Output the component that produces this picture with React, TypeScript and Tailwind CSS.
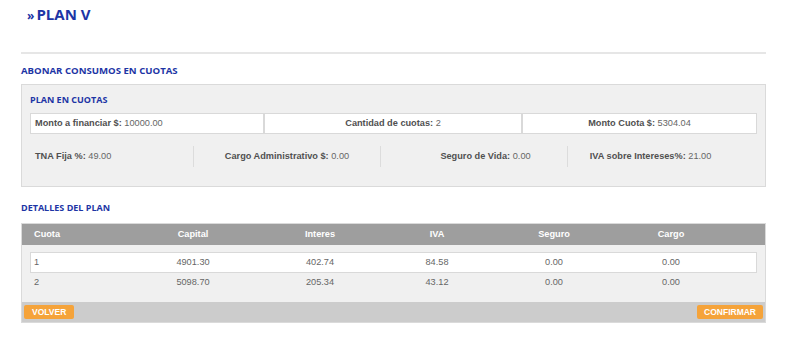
const columnas = 'grid grid-cols-[100px_124px_130px_104px_130px_104px] items-center'

interface Fila {
  cuota: string
  capital: string
  interes: string
  iva: string
  seguro: string
  cargo: string
}

const filas: Fila[] = [
  { cuota: '1', capital: '4901.30', interes: '402.74', iva: '84.58', seguro: '0.00', cargo: '0.00' },
  { cuota: '2', capital: '5098.70', interes: '205.34', iva: '43.12', seguro: '0.00', cargo: '0.00' }
]

function Dato({ label, value }: { label: string; value: string }) {
  return (
    <>
      <span className="font-bold text-[#505050]">{label}</span> {value}
    </>
  )
}

function FilaCuota({ fila }: { fila: Fila }) {
  return (
    <>
      <div className="pl-[3px]">{fila.cuota}</div>
      <div className="text-center">{fila.capital}</div>
      <div className="text-center">{fila.interes}</div>
      <div className="text-center">{fila.iva}</div>
      <div className="text-center">{fila.seguro}</div>
      <div className="text-center">{fila.cargo}</div>
    </>
  )
}

export default function App() {
  return (
    <div className="w-[800px] h-[344px] bg-white pl-[21px] pr-[34px] font-['Liberation_Sans',Arial,sans-serif] text-[9.2px] text-[#666]">
      <div className="h-[52px] pt-[4px] pl-[6px]">
        <h1 className="font-['Open_Sans',sans-serif] font-bold text-[15px] leading-[20px] text-[#1d35a5]">
          <span className="text-[12px] mr-[2px]">»</span>PLAN V
        </h1>
      </div>
      <div className="border-t-2 border-[#e6e6e6]" />

      {/* abonar en cuotas */}
      <h2 className="mt-[10px] mb-[7px] font-['Open_Sans',sans-serif] font-bold text-[9.6px] leading-[13px] text-[#1d35a5]">
        ABONAR CONSUMOS EN CUOTAS
      </h2>
      <div className="border border-[#dadada] bg-[#f0f0f0] px-[8px] pt-[9px] pb-[19px]">
        <h3 className="mb-[7px] font-['Open_Sans',sans-serif] font-bold text-[9px] leading-[12px] text-[#1d35a5]">
          PLAN EN CUOTAS
        </h3>
        <div className="grid grid-cols-[234px_258px_235px] h-[21px]">
          <div className="flex items-center border border-[#d9d9d9] bg-white pl-[4px]">
            <span><Dato label="Monto a financiar $:" value="10000.00" /></span>
          </div>
          <div className="flex items-center justify-center border border-[#d9d9d9] bg-white">
            <span><Dato label="Cantidad de cuotas:" value="2" /></span>
          </div>
          <div className="flex items-center justify-center border border-[#d9d9d9] bg-white">
            <span><Dato label="Monto Cuota $:" value="5304.04" /></span>
          </div>
        </div>
        <div className="mt-[12px] grid grid-cols-[163px_187px_187px_190px] h-[21px]">
          <div className="flex items-center pl-[5px]">
            <span><Dato label="TNA Fija %:" value="49.00" /></span>
          </div>
          <div className="flex items-center justify-center border-l border-[#dcdcdc]">
            <span><Dato label="Cargo Administrativo $:" value="0.00" /></span>
          </div>
          <div className="flex items-center justify-center border-l border-[#dcdcdc] pl-[23px]">
            <span><Dato label="Seguro de Vida:" value="0.00" /></span>
          </div>
          <div className="flex items-center justify-center border-l border-[#dcdcdc] pr-[24px]">
            <span><Dato label="IVA sobre Intereses%:" value="21.00" /></span>
          </div>
        </div>
      </div>

      {/* detalle */}
      <h2 className="mt-[15px] mb-[9px] font-['Open_Sans',sans-serif] font-bold text-[9px] leading-[12px] text-[#1d35a5]">
        DETALLES DEL PLAN
      </h2>
      <div className="border border-[#dadada]">
        <div className={`${columnas} h-[21px] bg-[#9e9e9e] pl-[9px] font-bold text-white`}>
          <div className="pl-[3px]">Cuota</div>
          <div className="text-center">Capital</div>
          <div className="text-center">Interes</div>
          <div className="text-center">IVA</div>
          <div className="text-center">Seguro</div>
          <div className="text-center">Cargo</div>
        </div>
        <div className="bg-[#f0f0f0] px-[8px] pt-[7px] pb-[9px]">
          <div className={`${columnas} h-[21px] border border-[#d9d9d9] bg-white`}>
            <FilaCuota fila={filas[0]} />
          </div>
          <div className={`${columnas} h-[20px] pl-[1px]`}>
            <FilaCuota fila={filas[1]} />
          </div>
        </div>
        <div className="flex h-[20px] items-center justify-between bg-[#cccccc] px-[2px]">
          <button className="h-[14px] rounded-[2px] bg-[#f5a33a] px-[8px] text-[8.5px] font-bold leading-[14px] text-white">
            VOLVER
          </button>
          <button className="h-[14px] rounded-[2px] bg-[#f5a33a] px-[7px] text-[8.5px] font-bold leading-[14px] text-white">
            CONFIRMAR
          </button>
        </div>
      </div>
    </div>
  )
}
